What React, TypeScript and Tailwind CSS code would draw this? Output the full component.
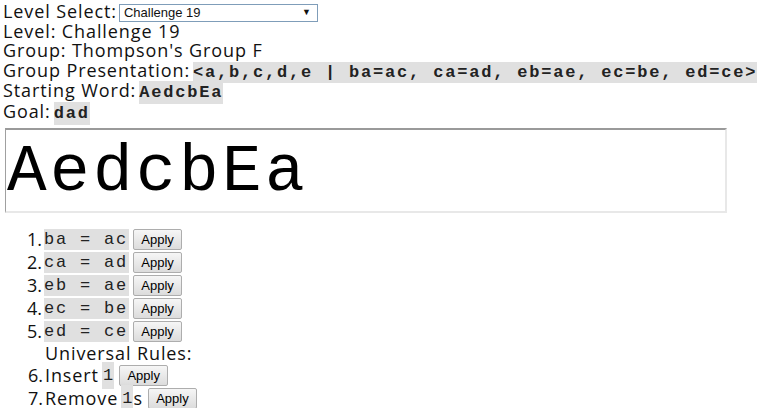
import React from 'react';

const rules = [
  { n: 1, lhs: 'ba', rhs: 'ac' },
  { n: 2, lhs: 'ca', rhs: 'ad' },
  { n: 3, lhs: 'eb', rhs: 'ae' },
  { n: 4, lhs: 'ec', rhs: 'be' },
  { n: 5, lhs: 'ed', rhs: 'ce' },
];

const Code: React.FC<{ children: React.ReactNode; className?: string }> = ({ children, className = '' }) => (
  <span
    className={`bg-[#e0e0e0] font-['Liberation_Mono',monospace] font-bold text-[17px] tracking-[1.8px] whitespace-pre text-[#222] ${className}`}
  >
    {children}
  </span>
);

const ApplyButton: React.FC<{ className?: string }> = ({ className = '' }) => (
  <button
    className={`h-[21px] w-[49px] border border-[#adadad] rounded-[2px] bg-gradient-to-b from-[#f6f6f6] to-[#dcdcdc] font-['Liberation_Sans',sans-serif] text-[13px] text-black tracking-normal leading-none ${className}`}
  >
    Apply
  </button>
);

export default function App() {
  return (
    <div className="bg-white h-[408px] text-[#111] font-['Open_Sans',sans-serif] text-[18px] tracking-[0.9px] pl-[3px] overflow-hidden">
      <div className="flex items-center h-[22px] pt-[1px]">
        <span>Level Select:</span>
        <div className="ml-[2px] mt-[2px] w-[199px] h-[18px] border border-[#7f9db9] flex items-center justify-between px-[4px] font-['Liberation_Sans',sans-serif] text-[13px] tracking-normal">
          <span>Challenge 19</span>
          <span className="text-[9px] mr-[2px]">▼</span>
        </div>
      </div>
      <div className="h-[19px] leading-[19px]">Level: Challenge 19</div>
      <div className="h-[19px] leading-[19px]">Group: Thompson's Group F</div>
      <div className="h-[20px] leading-[20px] whitespace-nowrap">
        Group Presentation:<Code className="ml-[3px] py-[1px]">{'<a,b,c,d,e | ba=ac, ca=ad, eb=ae, ec=be, ed=ce>'}</Code>
      </div>
      <div className="h-[21px] leading-[21px]">
        Starting Word:<Code className="ml-[3px] py-[2px]">AedcbEa</Code>
      </div>
      <div className="h-[21px] leading-[21px]">
        Goal:<Code className="ml-[3px] py-[2px]">dad</Code>
      </div>

      {/* current word */}
      <div className="mt-[6px] ml-[2px] w-[722px] h-[85px] border-t-2 border-t-[#9a9a9a] border-l border-l-[#a0a0a0] border-r-2 border-r-[#e8e8e8] border-b-2 border-b-[#e8e8e8] flex items-center pl-[1px] pt-[4px] tracking-normal">
        <span className="font-['Liberation_Mono',monospace] text-[66px] tracking-[3.4px] leading-none text-black">AedcbEa</span>
      </div>

      <div className="mt-[16px] flex flex-col gap-[2px]">
        {rules.map((r) => (
          <div key={r.n} className="flex items-center h-[21px]">
            <span className="w-[41px] text-right pr-[2px] tracking-normal">{r.n}.</span>
            <Code className="h-[21px] leading-[21px] pr-[1px] font-normal">{`${r.lhs} = ${r.rhs}`}</Code>
            <ApplyButton className="ml-[4px]" />
          </div>
        ))}
        <div className="h-[19px] leading-[19px] pl-[42px]">Universal Rules:</div>
        <div className="flex items-center h-[21px]">
          <span className="w-[41px] text-right pr-[1px] tracking-normal">6.</span>
          <span className="ml-[1px]">Insert</span>
          <Code className="ml-[3px] py-[1px] px-[1px] tracking-normal font-normal">1</Code>
          <ApplyButton className="ml-[5px] w-[47px]" />
        </div>
        <div className="flex items-center h-[21px]">
          <span className="w-[41px] text-right pr-[1px] tracking-normal">7.</span>
          <span className="ml-[1px]">Remove</span>
          <Code className="ml-[3px] py-[1px] px-[1px] tracking-normal font-normal">1</Code>
          <span>s</span>
          <ApplyButton className="ml-[5px]" />
        </div>
      </div>
    </div>
  );
}
